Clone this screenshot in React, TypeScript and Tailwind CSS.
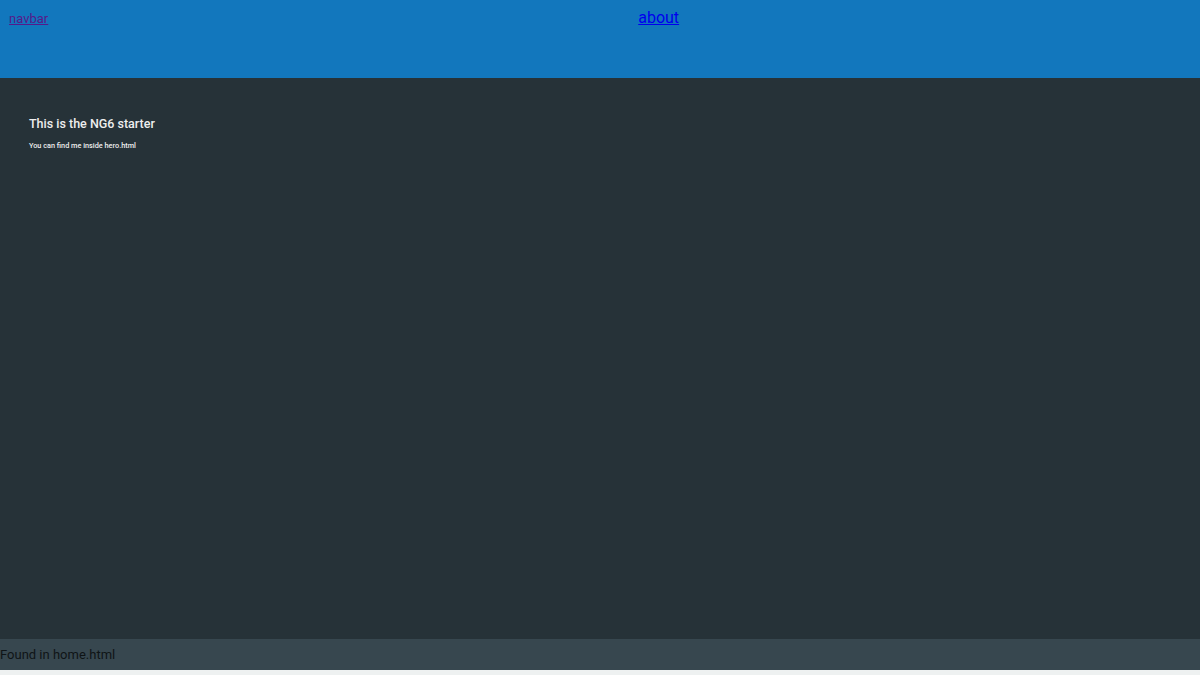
import React from 'react';

const App: React.FC = () => {
  return (
    <div className="flex flex-col w-[1200px] h-[675px] bg-[#eef1f1] font-['Roboto',sans-serif]">
      <div className="h-[78px] bg-[#1277bd] flex items-start">
        <a href="#" className="ml-[9px] mt-[11px] text-[13px] leading-[16px] text-[#551a8b] underline">
          navbar
        </a>
        <a href="#" className="ml-[590px] mt-[8px] text-[16px] leading-[20px] text-[#0000ee] underline">
          about
        </a>
      </div>
      <div className="h-[561px] bg-[#263238] px-[29px] pt-[38px]">
        <h1 className="text-[12.5px] leading-[16px] font-medium text-[#eeeeee]">This is the NG6 starter</h1>
        <p className="mt-[9px] text-[7.3px] leading-[9px] font-medium text-[#eeeeee]">You can find me inside hero.html</p>
      </div>
      <div className="h-[31px] bg-[#37474f] flex items-center">
        <p className="text-[13px] leading-[16px] text-[#0f1416]">Found in home.html</p>
      </div>
    </div>
  );
};

export default App;
